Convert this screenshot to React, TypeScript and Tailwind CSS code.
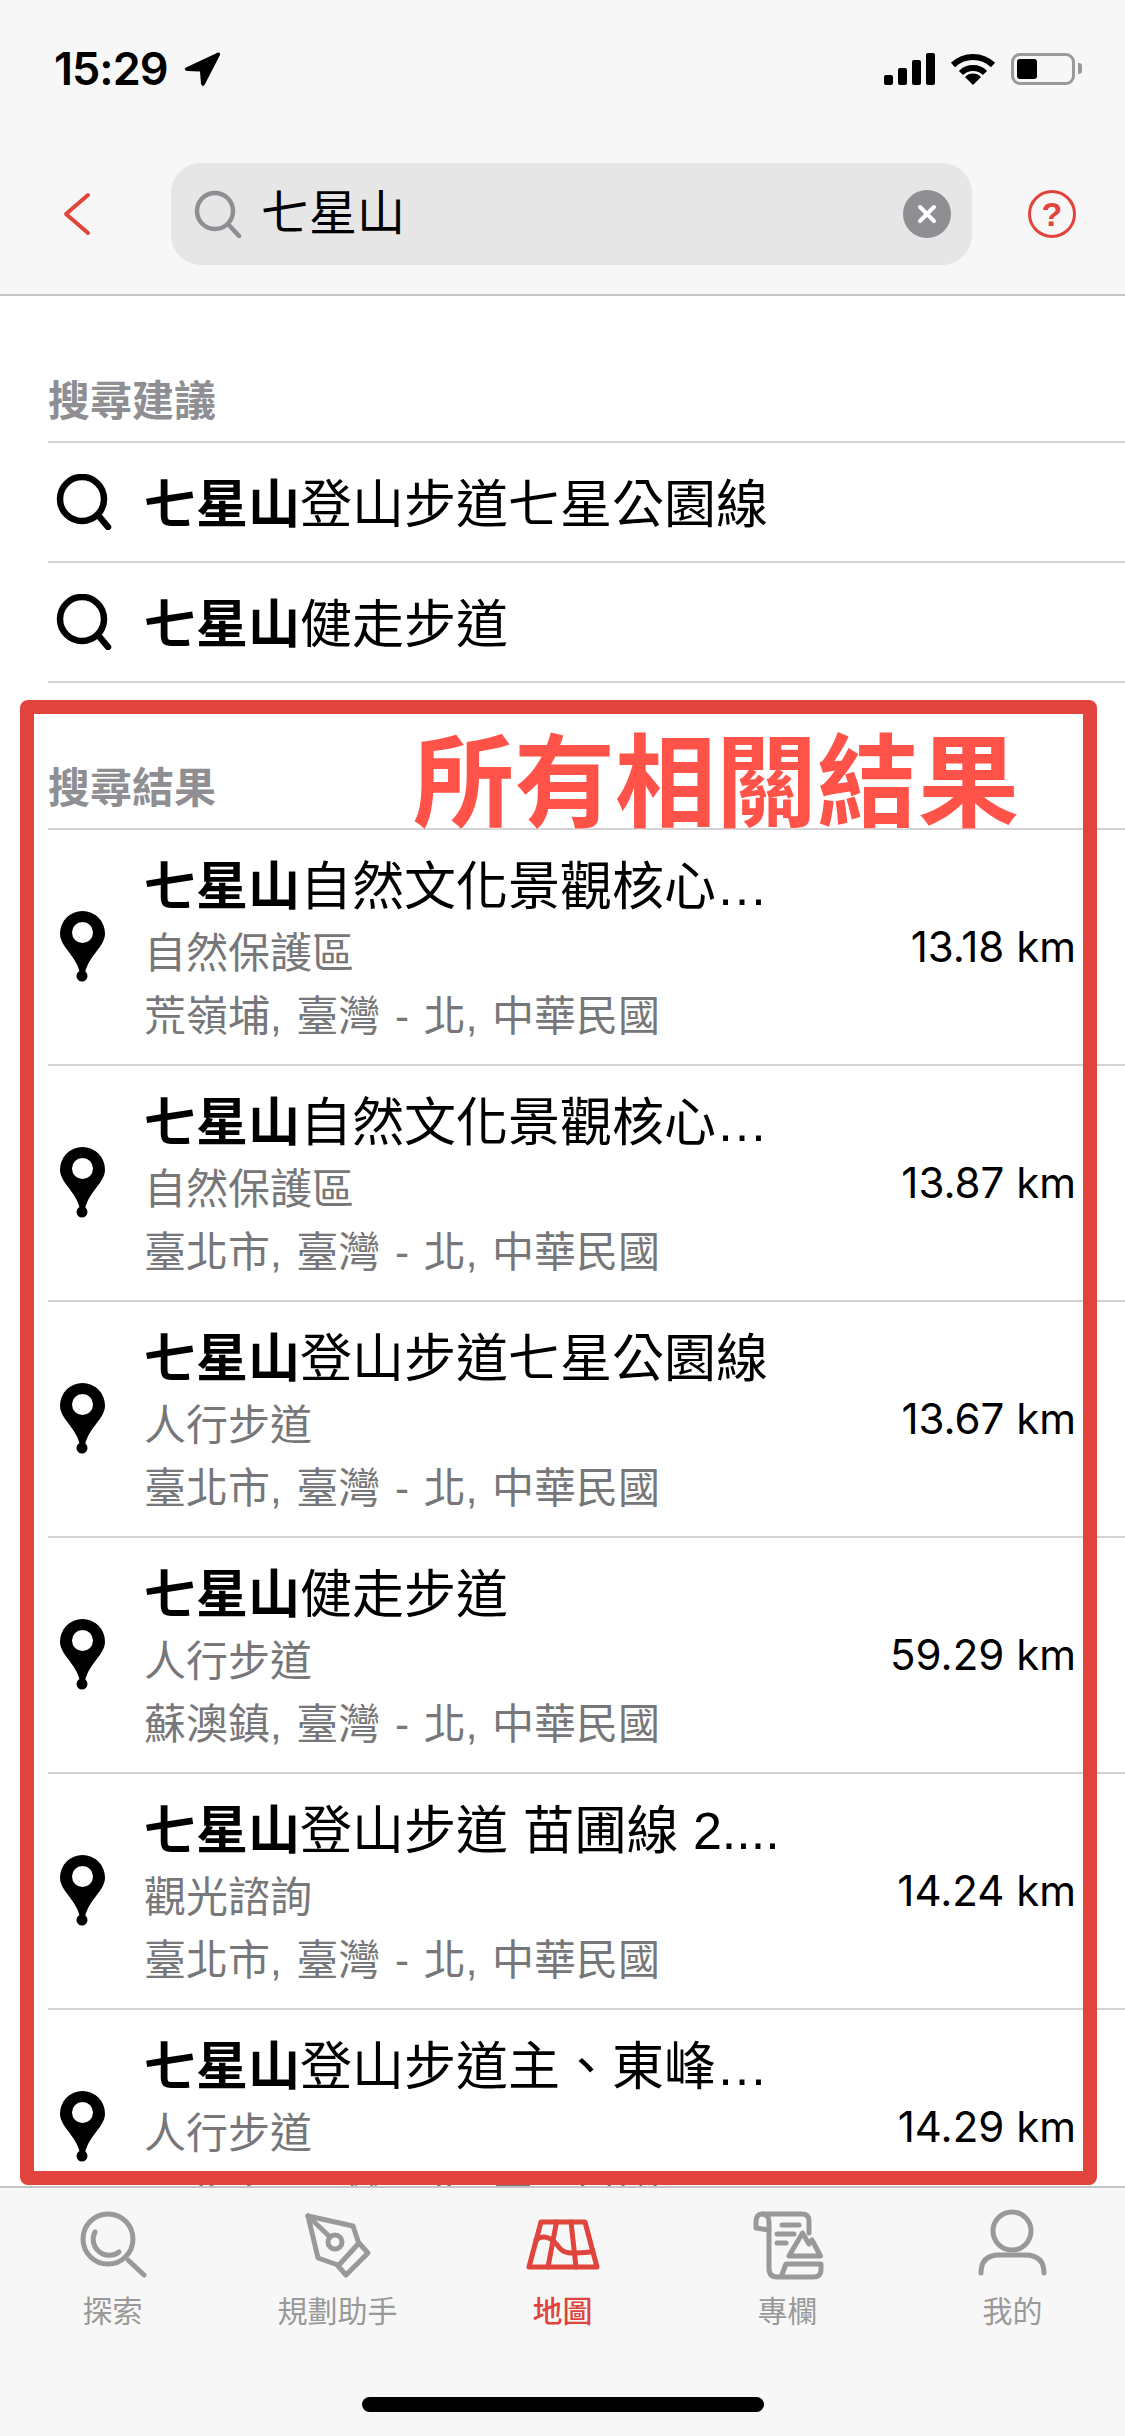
const FONT = "font-['Liberation_Sans','Noto_Sans_CJK_TC',sans-serif]";

const suggestions = ['登山步道七星公園線', '健走步道'];

const results = [
  { rest: '自然文化景觀核心…', kind: '自然保護區', place: '荒嶺埔, 臺灣 - 北, 中華民國', distance: '13.18 km' },
  { rest: '自然文化景觀核心…', kind: '自然保護區', place: '臺北市, 臺灣 - 北, 中華民國', distance: '13.87 km' },
  { rest: '登山步道七星公園線', kind: '人行步道', place: '臺北市, 臺灣 - 北, 中華民國', distance: '13.67 km' },
  { rest: '健走步道', kind: '人行步道', place: '蘇澳鎮, 臺灣 - 北, 中華民國', distance: '59.29 km' },
  { rest: '登山步道 苗圃線 2....', kind: '觀光諮詢', place: '臺北市, 臺灣 - 北, 中華民國', distance: '14.24 km' },
  { rest: '登山步道主、東峰…', kind: '人行步道', place: '臺北市, 臺灣 - 北, 中華民國', distance: '14.29 km' },
];

function StatusBar() {
  return (
    <div className="flex h-[90px] items-start justify-between pt-[46px] pl-[54px] pr-[43px]">
      <div className="flex items-center gap-[16px]">
        <span className="font-['Inter',sans-serif] text-[45px] leading-[46px] font-semibold tracking-[-1px] text-black">15:29</span>
        <svg width="36" height="35" viewBox="0 0 36 35">
          <path d="M34 0.5 L2 15.5 Q-1 18 3 19 L16 19.5 L17 32 Q19 36 21 32 L36 3 Q36.5 0 34 0.5 Z" fill="#000" />
        </svg>
      </div>
      <div className="flex items-center gap-[15px] pt-[6px]">
        <div className="flex items-end gap-[5px]">
          <div className="h-[10px] w-[9px] rounded-[2px] bg-black" />
          <div className="h-[17px] w-[9px] rounded-[2px] bg-black" />
          <div className="h-[25px] w-[9px] rounded-[2px] bg-black" />
          <div className="h-[32px] w-[9px] rounded-[2px] bg-black" />
        </div>
        <svg width="46" height="33" viewBox="0 0 46 33" fill="none" stroke="#000" strokeWidth="6">
          <path d="M3 13 A29 29 0 0 1 43 13" />
          <path d="M11 21 A17 17 0 0 1 35 21" />
          <path d="M23 33 L15 25 A11 11 0 0 1 31 25 Z" fill="#000" stroke="none" />
        </svg>
        <div className="flex items-center gap-[3px]">
          <div className="h-[32px] w-[64px] rounded-[9px] border-[3px] border-[#9a9a9a] p-[3px]">
            <div className="h-full w-[20px] rounded-[3px] bg-black" />
          </div>
          <div className="h-[11px] w-[4px] rounded-r-[3px] bg-[#9a9a9a]" />
        </div>
      </div>
    </div>
  );
}

function SearchBar() {
  return (
    <div className="flex items-center pt-[73px] pl-[62px] pr-[48px]">
      <svg width="30" height="44" viewBox="0 0 30 44" fill="none" stroke="#e0443c" strokeWidth="4" strokeLinecap="round" strokeLinejoin="round">
        <path d="M26 3 L4 22 L26 41" />
      </svg>
      <div className="ml-[79px] flex h-[102px] w-[801px] items-center rounded-[30px] bg-[#e6e6e7] pl-[23px] pr-[21px]">
        <svg width="48" height="48" viewBox="0 0 48 48" fill="none" stroke="#8e8e93" strokeWidth="4.5" strokeLinecap="round">
          <circle cx="21" cy="21" r="18" />
          <path d="M34 34 L45 46" />
        </svg>
        <span className="ml-[19px] flex-1 text-[48px] leading-[60px] text-black">七星山</span>
        <div className="flex h-[48px] w-[48px] items-center justify-center rounded-full bg-[#8e8e93]">
          <svg width="22" height="22" viewBox="0 0 22 22" stroke="#fff" strokeWidth="4" strokeLinecap="round">
            <path d="M4 4 L18 18 M18 4 L4 18" />
          </svg>
        </div>
      </div>
      <div className="ml-[56px] flex h-[48px] w-[48px] items-center justify-center rounded-full border-[3px] border-[#e0443c] text-[34px] leading-none font-bold text-[#e0443c]">
        ?
      </div>
    </div>
  );
}

function SectionTitle({ title }: { title: string }) {
  return (
    <div className="ml-[48px] flex h-[147px] items-end border-b-2 border-[#d2d2d4] pb-[11px] text-[42px] leading-[56px] font-bold text-[#8e8e93]">
      {title}
    </div>
  );
}

function SuggestionRow({ rest }: { rest: string }) {
  return (
    <div className="ml-[48px] flex h-[120px] items-center border-b-2 border-[#d2d2d4] pl-[8px]">
      <svg width="56" height="56" viewBox="0 0 56 56" fill="none" stroke="#000" strokeWidth="6.5" strokeLinecap="round">
        <circle cx="26" cy="25" r="22" />
        <path d="M42 41 L52 53" />
      </svg>
      <div className="ml-[32px] pt-[6px] text-[52px] leading-[64px] text-black">
        <span className="font-bold">七星山</span>
        {rest}
      </div>
    </div>
  );
}

function ResultRow({ rest, kind, place, distance }: (typeof results)[number]) {
  return (
    <div className="ml-[48px] flex h-[236px] shrink-0 items-center border-b-2 border-[#d2d2d4] pl-[12px]">
      <svg width="45" height="72" viewBox="0 0 45 72" className="shrink-0">
        <path
          fillRule="evenodd"
          d="M22.5 0 A22.5 22.5 0 0 1 45 22.5 C45 36 29 44 25 62 H20 C16 44 0 36 0 22.5 A22.5 22.5 0 0 1 22.5 0 Z M22.5 11 A10.5 10.5 0 1 0 22.5 32 A10.5 10.5 0 1 0 22.5 11 Z"
          fill="#000"
        />
        <circle cx="22" cy="65" r="5.5" fill="#000" />
      </svg>
      <div className="ml-[39px] flex-1 pt-[12px]">
        <div className="-translate-y-[3px] text-[52px] leading-[64px] text-black">
          <span className="font-bold">七星山</span>
          {rest}
        </div>
        <div className="text-[42px] leading-[64px] text-[#77777a]">{kind}</div>
        <div className="text-[42px] leading-[62px] text-[#77777a] [word-spacing:3px]">{place}</div>
      </div>
      <div className="mr-[49px] font-['Inter',sans-serif] text-[42px] leading-[48px] text-black">{distance}</div>
    </div>
  );
}

function ExploreIcon() {
  return (
    <svg width="80" height="72" viewBox="0 0 80 72" fill="none" stroke="#999" strokeWidth="5" strokeLinecap="round" strokeLinejoin="round">
      <circle cx="35" cy="31" r="25" />
      <path d="M55 52 L71 67" />
      <path d="M22 24 A16 16 0 0 0 46 44" />
    </svg>
  );
}

function PenIcon() {
  return (
    <svg width="80" height="72" viewBox="0 0 80 72" fill="none" stroke="#999" strokeWidth="5" strokeLinecap="round" strokeLinejoin="round">
      <path d="M10 8 L55 18 L61 36" />
      <path d="M10 8 L20 50 L40 57" />
      <path d="M61 35 L70 45 L48 67 L40 58 Z" />
      <path d="M10 8 L32 29" />
      <circle cx="37" cy="34" r="7" />
    </svg>
  );
}

function MapIcon() {
  return (
    <svg width="80" height="72" viewBox="0 0 80 72" fill="none" stroke="#e0443c" strokeWidth="5" strokeLinecap="round" strokeLinejoin="round">
      <path d="M18 14 H62 L74 59 H6 Z" />
      <path d="M33.5 14 L25 59" />
      <path d="M48 14 L53 59" />
      <path d="M13 32 C21 26 29 30 35 38 C40 46 47 46 67 44" />
    </svg>
  );
}

function ScrollIcon() {
  return (
    <svg width="80" height="72" viewBox="0 0 80 72" fill="none" stroke="#999" strokeWidth="5" strokeLinecap="round" strokeLinejoin="round">
      <path d="M14 6 H54 Q61 6 61 13 V25" />
      <path d="M21 22 V14 Q21 6 14 6 Q8 6 8 14 V20 L21 22" />
      <path d="M21 22 V60 Q21 69 29 69 H65 Q73 69 73 62 V56 H38 L33 69" />
      <path d="M34 17 H51" />
      <path d="M29 26 H46" />
      <path d="M29 35 H38" />
      <path d="M41 48 L54.5 25 L61 36 L64 32 L72.5 48 Z" />
    </svg>
  );
}

function PersonIcon() {
  return (
    <svg width="80" height="72" viewBox="0 0 80 72" fill="none" stroke="#999" strokeWidth="5" strokeLinecap="round" strokeLinejoin="round">
      <circle cx="39" cy="23" r="19" />
      <path d="M8 65 Q8 47 26 47 H52 Q71 47 71 65" />
    </svg>
  );
}

const tabs = [
  { label: '探索', Icon: ExploreIcon, active: false },
  { label: '規劃助手', Icon: PenIcon, active: false },
  { label: '地圖', Icon: MapIcon, active: true },
  { label: '專欄', Icon: ScrollIcon, active: false },
  { label: '我的', Icon: PersonIcon, active: false },
];

function TabBar() {
  return (
    <div className="flex h-[250px] shrink-0 flex-col border-t-2 border-[#c4c4c6] bg-[#f7f7f7]">
      <div className="grid grid-cols-5 pt-[20px]">
        {tabs.map(({ label, Icon, active }) => (
          <div key={label} className="flex flex-col items-center">
            <Icon />
            <span className={`mt-[14px] text-[30px] leading-[36px] ${active ? 'font-medium text-[#e0443c]' : 'text-[#999]'}`}>
              {label}
            </span>
          </div>
        ))}
      </div>
      <div className="mt-auto mb-[24px] h-[15px] w-[402px] self-center rounded-full bg-black" />
    </div>
  );
}

export default function App() {
  return (
    <div className={`flex h-[2436px] w-[1125px] flex-col overflow-hidden bg-white ${FONT}`}>
      <div className="h-[296px] shrink-0 border-b-2 border-[#c4c4c6] bg-[#f7f7f7]">
        <StatusBar />
        <SearchBar />
      </div>
      <div className="relative flex-1 overflow-hidden">
        <SectionTitle title="搜尋建議" />
        {suggestions.map((rest) => (
          <SuggestionRow key={rest} rest={rest} />
        ))}
        <SectionTitle title="搜尋結果" />
        {results.map((row) => (
          <ResultRow key={row.distance} {...row} />
        ))}
        {/* annotation drawn over the list */}
        <div className="absolute top-[404px] left-[20px] h-[1485px] w-[1077px] rounded-[8px] border-[14px] border-[#e0443c]" />
        <div className="absolute top-[428px] left-[413px] text-[101px] leading-[120px] font-bold text-[#ff5349] [text-shadow:0_0_3px_#fff]">
          所有相關結果
        </div>
      </div>
      <TabBar />
    </div>
  );
}
